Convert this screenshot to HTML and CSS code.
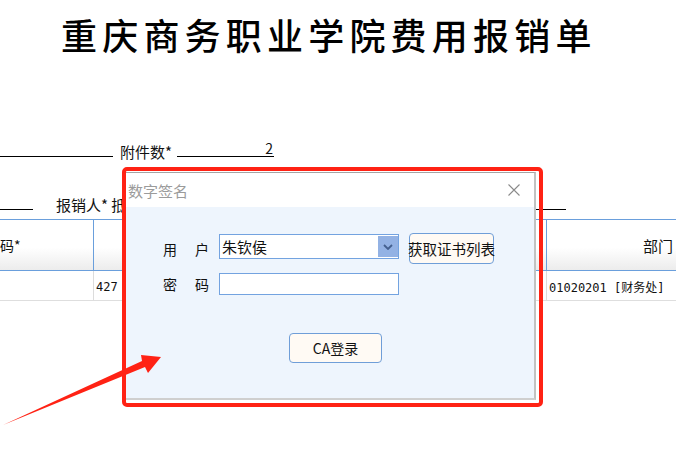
FILE: index.html
```html
<!DOCTYPE html>
<html lang="zh-CN">
<head>
<meta charset="utf-8">
<title>重庆商务职业学院费用报销单</title>
<link rel="stylesheet" href="styles.css">
</head>
<body>
<div class="page">
  <h1 class="title">重庆商务职业学院费用报销单</h1>
  <div class="row row1">
    <span class="blank w113"></span>
    <span class="label ml7">附件数*</span>
    <span class="blank w97 ml5 num">2</span>
  </div>
  <div class="row row2">
    <span class="blank w33"></span>
    <span class="label ml23">报销人* 抵</span>
    <span class="blank w140 push"></span>
  </div>
  <div class="grid">
    <div class="hcell c1"><span class="cut">码*</span></div>
    <div class="hcell c2"></div>
    <div class="hcell c3">部门</div>
    <div class="dcell c1"></div>
    <div class="dcell c2">427</div>
    <div class="dcell c3">01020201 [财务处]</div>
  </div>
</div>

<div class="dialog">
  <div class="dlg-title">
    <span class="dlg-name">数字签名</span>
    <svg class="close" width="12" height="12" viewBox="0 0 12 12"><path d="M0.5 0.5 L11.5 11.5 M11.5 0.5 L0.5 11.5" stroke="#8a8a8a" stroke-width="1.1" fill="none"/></svg>
  </div>
  <div class="dlg-body">
    <div class="form">
      <div class="flabel"><span>用</span><span>户</span></div>
      <div class="select">
        <span class="sel-text">朱钦侯</span>
        <span class="sel-arrow"><svg width="10" height="6" viewBox="0 0 10 6"><path d="M1 1 L5 5 L9 1" stroke="#44608f" stroke-width="1.8" fill="none"/></svg></span>
      </div>
      <button class="btn cert">获取证书列表</button>
      <div class="flabel"><span>密</span><span>码</span></div>
      <div class="input"></div>
    </div>
    <button class="btn ca">CA登录</button>
  </div>
</div>

<div class="annot"></div>
<svg class="arrow-anno" width="676" height="461" viewBox="0 0 676 461">
  <polygon points="3,425 142,361 141,355 161,357 148,373 145,367" fill="#ff2214"/>
</svg>
</body>
</html>
```

FILE: styles.css
```css
html, body {
  margin: 0;
  padding: 0;
}
body {
  width: 676px;
  height: 461px;
  overflow: hidden;
  position: relative;
  background: #ffffff;
  font-family: "Noto Sans CJK SC", "Noto Sans", sans-serif;
  color: #111;
}
.page {
  width: 676px;
}
.title {
  margin: 12px 0 0 61px;
  font-size: 36px;
  line-height: 44px;
  font-weight: 500;
  letter-spacing: 5.2px;
  white-space: nowrap;
  color: #000;
}
.row {
  display: flex;
  align-items: flex-start;
  height: 20px;
  font-size: 15px;
  line-height: 20px;
  white-space: nowrap;
}
.row1 { margin-top: 86px; }
.row2 { margin-top: 33px; }
.blank {
  display: block;
  height: 14px;
  border-bottom: 1px solid #000;
  box-sizing: content-box;
}
.num {
  text-align: right;
  font-size: 14px;
  line-height: 12px;
  padding-right: 1px;
  box-sizing: border-box;
  height: 15px;
}
.w113 { width: 113px; }
.w97 { width: 97px; }
.w33 { width: 33px; }
.w140 { width: 140px; }
.ml7 { margin-left: 7px; }
.ml5 { margin-left: 5px; }
.ml23 { margin-left: 23px; }
.push { margin-left: auto; margin-right: 110px; }
.label { color: #111; }

.grid {
  margin-top: 4px;
  display: grid;
  grid-template-columns: 93px 453px 1fr;
  border-top: 1px solid #6a9fdc;
}
.hcell {
  height: 50px;
  border-bottom: 1px solid #6a9fdc;
  background: linear-gradient(#ffffff 0%, #ffffff 55%, #ececec 100%);
  font-size: 14px;
  display: flex;
  align-items: center;
  box-sizing: content-box;
}
.hcell.c2, .hcell.c3 { border-left: 1px solid #6a9fdc; }
.hcell.c3 { padding-left: 96px; font-size: 15px; }
.cut { margin-left: 0; }
.dcell {
  border-bottom: 1px solid #dedede;
  font-size: 12px;
  display: flex;
  align-items: center;
  padding-top: 2px;
  box-sizing: border-box;
  height: 30px;
  white-space: nowrap;
  font-family: "DejaVu Sans Mono", "Noto Sans CJK SC", monospace;
}
.dcell.c2, .dcell.c3 { border-left: 1px solid #dcdcdc; }
.dcell.c2 { padding-left: 2px; }
.dcell.c3 { padding-left: 2px; }

.dialog {
  position: absolute;
  left: 126px;
  top: 172px;
  width: 410px;
  box-sizing: border-box;
  border-top: 1px solid #a4a4a4;
  border-right: 2px solid #c2c2c2;
  border-bottom: 2px solid #cfcfcf;
  background: #ffffff;
}
.dlg-title {
  height: 34px;
  display: flex;
  align-items: center;
  justify-content: space-between;
  padding: 0 14px 0 2px;
  background: #ffffff;
}
.dlg-name {
  font-size: 15px;
  color: #9b9b9b;
}
.close { display: block; }
.dlg-body {
  height: 191px;
  background: #eef5fd;
  padding: 26px 0 0 37px;
  box-sizing: border-box;
}
.form {
  display: grid;
  grid-template-columns: 46px 180px 85px;
  grid-template-rows: 31px 22px;
  column-gap: 10px;
  row-gap: 9px;
}
.flabel {
  display: flex;
  justify-content: space-between;
  font-size: 14px;
  line-height: 22px;
  color: #111;
  align-self: center;
}
.select {
  margin-top: 1px;
  height: 25px;
  box-sizing: border-box;
  border: 1px solid #73a3e0;
  background: #fff;
  display: flex;
  align-items: center;
  justify-content: space-between;
}
.sel-text {
  font-size: 15px;
  padding-left: 2px;
  color: #111;
}
.sel-arrow {
  width: 20px;
  height: 21px;
  background: #93b2e4;
  display: flex;
  align-items: center;
  justify-content: center;
}
.sel-arrow svg { display: block; }
.input {
  height: 22px;
  box-sizing: border-box;
  border: 1px solid #73a3e0;
  background: #fff;
}
.btn {
  font-family: "Noto Sans CJK SC", "Noto Sans", sans-serif;
  background: #fffaf4;
  border: 1px solid #6f9ed8;
  border-radius: 4px;
  color: #111;
  padding: 0;
  white-space: nowrap;
  display: flex;
  align-items: center;
  justify-content: center;
  box-sizing: border-box;
}
.cert {
  width: 85px;
  height: 31px;
  font-size: 14.5px;
  overflow: visible;
}
.ca {
  margin: 38px 0 0 126px;
  width: 93px;
  height: 30px;
  font-size: 14px;
}

.annot {
  position: absolute;
  left: 122px;
  top: 167px;
  width: 421px;
  height: 240px;
  box-sizing: border-box;
  border: 4px solid #ff2214;
  border-radius: 5px;
  pointer-events: none;
}
.arrow-anno {
  position: absolute;
  left: 0;
  top: 0;
  pointer-events: none;
}
```
